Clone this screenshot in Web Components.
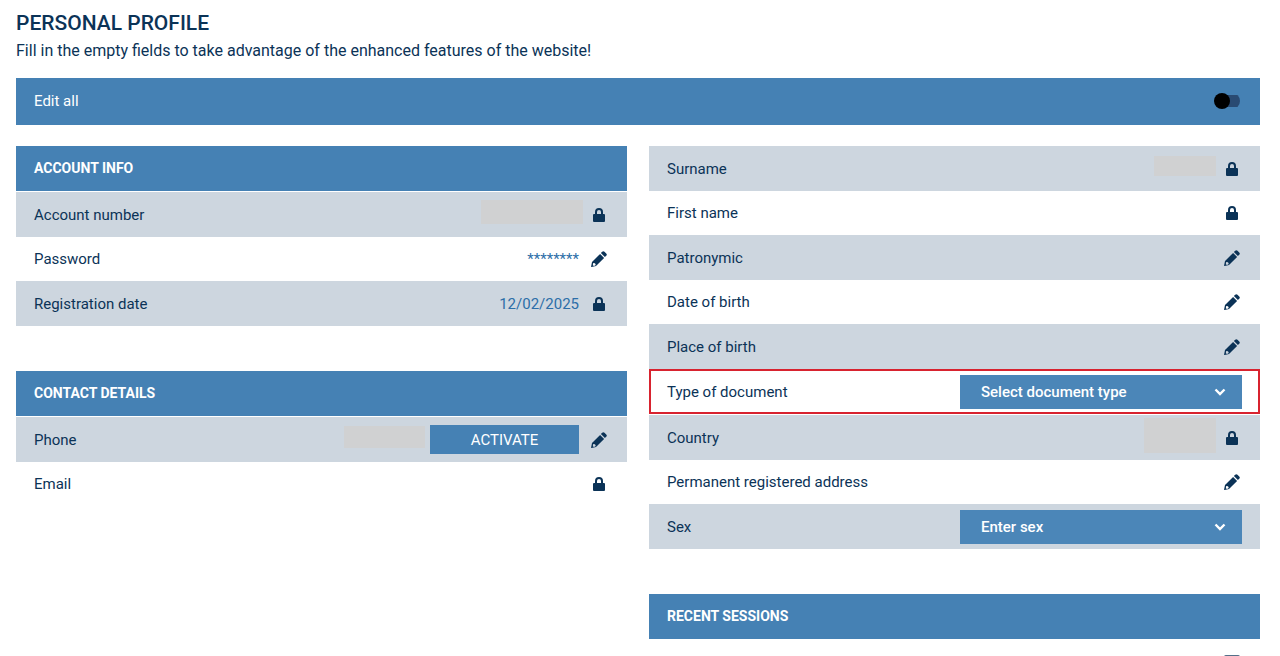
<!DOCTYPE html>
<html lang="en">
<head>
<meta charset="utf-8">
<title>Personal profile</title>
<style>
  html, body { margin: 0; background: #fff; }
  body {
    --blue: #4581b4;
    --shade: #cdd6df;
    --navy: #0b3357;
    --line: #d8232f;
    color: var(--navy);
    font: 400 15px/20px Roboto, "Noto Sans", sans-serif;
  }
</style>
</head>
<body>
<profile-page>
  <edit-bar slot="bar">Edit all</edit-bar>

  <profile-section slot="left" heading="Account info">
    <profile-row label="Account number" icon="lock" shaded><masked-value style="--w:102px;--h:24px"></masked-value></profile-row>
    <profile-row label="Password" icon="pencil">********</profile-row>
    <profile-row label="Registration date" icon="lock" shaded>12/02/2025</profile-row>
  </profile-section>
  <profile-section slot="left" heading="Contact details">
    <profile-row label="Phone" icon="pencil" shaded><masked-value style="--w:81px;--h:22px"></masked-value><action-button>ACTIVATE</action-button></profile-row>
    <profile-row label="Email" icon="lock"></profile-row>
  </profile-section>

  <profile-section slot="right">
    <profile-row label="Surname" icon="lock" shaded><masked-value style="--w:62px;--h:20px"></masked-value></profile-row>
    <profile-row label="First name" icon="lock"></profile-row>
    <profile-row label="Patronymic" icon="pencil" shaded></profile-row>
    <profile-row label="Date of birth" icon="pencil"></profile-row>
    <profile-row label="Place of birth" icon="pencil" shaded></profile-row>
    <profile-select label="Type of document" placeholder="Select document type" options="Passport,ID card,Driving licence" marked></profile-select>
    <profile-row label="Country" icon="lock" shaded><masked-value style="--w:72px;--h:35px"></masked-value></profile-row>
    <profile-row label="Permanent registered address" icon="pencil"></profile-row>
    <profile-select label="Sex" placeholder="Enter sex" options="Female,Male" shaded></profile-select>
  </profile-section>
  <profile-section slot="right" heading="Recent sessions">
    <profile-row icon="screen"></profile-row>
  </profile-section>
</profile-page>

<script>
const icons = {
  lock: '<svg viewBox="0 0 12 14" width="12" height="14" aria-hidden="true"><path fill="none" stroke="currentColor" stroke-width="2" d="M3 7V4a3 3 0 0 1 6 0v3"/><rect y="6" width="12" height="8" rx="1" fill="currentColor"/></svg>',
  pencil: '<svg viewBox="0 0 16 16" width="16" height="16" aria-hidden="true"><path fill="currentColor" d="M11.200.8a1.600 1.600 0 0 1 2.300 0l1.700 1.700a1.600 1.600 0 0 1 0 2.300L13.900 6.100 9.900 2.100zM9.100 2.900l4 4L5 15 .6 15.900a.5.5 0 0 1-.5-.5L1 11zM2.200 12l-.4 2.200 1.200 .9 1.800-1.100-.8-1.700z" fill-rule="evenodd"/></svg>',
  screen: '<svg viewBox="0 0 16 14" width="16" height="14" aria-hidden="true"><path fill="currentColor" fill-opacity=".7" d="M2 0h12a2 2 0 0 1 2 2v7a2 2 0 0 1-2 2h-4v2h2v1H4v-1h2v-2H2a2 2 0 0 1-2-2V2a2 2 0 0 1 2-2zm0 2v7h12V2z"/></svg>'
};

class Base extends HTMLElement {
  constructor() { super(); this.attachShadow({ mode: 'open' }); }
  connectedCallback() { this.shadowRoot.innerHTML = this.view(); }
  attr(name) { return this.getAttribute(name) || ''; }
}

const rowStyles = `
  :host { display: flex; align-items: center; gap: 10px; box-sizing: border-box; height: 44px; padding: 0 18px; }
  :host([shaded]) { height: 45px; background: var(--shade); }
  .label { flex: 1; }
`;

class ProfilePage extends Base {
  view() {
    return `<style>
      :host { display: block; box-sizing: border-box; height: 100vh; overflow: hidden; padding: 11px 20px 0 16px; }
      h1 { margin: 0; font-size: 21px; line-height: 24px; font-weight: 500; text-transform: uppercase; }
      p { margin: 6px 0 17px; font-size: 16px; line-height: 20px; }
      .columns { display: grid; grid-template-columns: 1fr 1fr; gap: 22px; margin-top: 21px; }
      .column { display: flex; flex-direction: column; gap: 45px; }
    </style>
    <h1>Personal profile</h1>
    <p>Fill in the empty fields to take advantage of the enhanced features of the website!</p>
    <slot name="bar"></slot>
    <div class="columns">
      <div class="column"><slot name="left"></slot></div>
      <div class="column"><slot name="right"></slot></div>
    </div>`;
  }
}

class EditBar extends Base {
  view() {
    return `<style>
      :host { display: block; background: var(--blue); color: #fff; }
      label { display: flex; align-items: center; justify-content: space-between; height: 46px; padding: 0 20px 1px 18px; }
      input { appearance: none; display: flex; align-items: center; margin: 0; width: 26px; height: 16px;
        background: linear-gradient(#294a72, #294a72) right center / 20px 12px no-repeat; border-radius: 8px; }
      input::before { content: ""; width: 16px; height: 16px; border-radius: 50%; background: #000; }
      input:checked { justify-content: flex-end; background-position: left center; }
    </style>
    <label><slot></slot><input type="checkbox"></label>`;
  }
}

class ProfileSection extends Base {
  view() {
    return `<style>
      :host { display: block; }
      h2 { margin: 0 0 1px; padding: 0 18px; background: var(--blue); color: #fff;
        font-size: 14px; line-height: 45px; font-weight: 700; text-transform: uppercase; }
    </style>
    ${this.attr('heading') ? `<h2>${this.attr('heading')}</h2>` : ''}<slot></slot>`;
  }
}

class ProfileRow extends Base {
  view() {
    const icon = this.attr('icon');
    const glyph = icon === 'pencil'
      ? `<button class="icon" type="button" aria-label="Edit ${this.attr('label')}">${icons.pencil}</button>`
      : `<span class="icon">${icons[icon]}</span>`;
    return `<style>${rowStyles}
      .value { display: flex; align-items: center; gap: 5px; color: #2c6ea8; }
      .icon { display: flex; justify-content: center; width: 20px; padding: 0; border: 0; background: none; color: var(--navy); }
    </style>
    <span class="label">${this.attr('label')}</span><span class="value"><slot></slot></span>${glyph}`;
  }
}

class ProfileSelect extends Base {
  view() {
    const options = this.attr('options').split(',').map(o => `<option>${o}</option>`).join('');
    return `<style>${rowStyles}
      :host([marked]) { height: 45px; margin-bottom: 1px; border: 2px solid var(--line); padding: 0 16px; }
      .box { display: grid; grid-template-columns: 1fr 12px; align-items: center; width: 282px; box-sizing: border-box; padding-right: 16px; background: #4b86b8; color: #fff; }
      select { grid-area: 1 / 1 / 2 / 3; appearance: none; height: 34px; margin: 0 -16px 0 0; padding: 0 38px 0 21px; border: 0; border-radius: 0;
        background: none; color: inherit; font: inherit; font-weight: 500; }
      option { color: var(--navy); background: #fff; }
      svg { grid-area: 1 / 2; pointer-events: none; }
    </style>
    <label class="label" for="field">${this.attr('label')}</label>
    <span class="box">
      <select id="field"><option selected>${this.attr('placeholder')}</option>${options}</select>
      <svg viewBox="0 0 12 8" width="12" height="8" aria-hidden="true"><path d="M1.500 1.500 6 6l4.500-4.500" fill="none" stroke="currentColor" stroke-width="2.400"/></svg>
    </span>`;
  }
}

class MaskedValue extends Base {
  view() {
    return `<style>
      :host { display: block; width: var(--w); height: var(--h); margin-bottom: 5px; background: #d0d1d2; }
      :host(:last-child) { margin-right: -4px; }
    </style>`;
  }
}

class ActionButton extends Base {
  view() {
    return `<style>
      :host { display: block; }
      button { display: block; width: 149px; height: 29px; padding: 0; border: 0; background: var(--blue); color: #fff; font: inherit; }
    </style><button type="button"><slot></slot></button>`;
  }
}

customElements.define('profile-page', ProfilePage);
customElements.define('edit-bar', EditBar);
customElements.define('profile-section', ProfileSection);
customElements.define('profile-row', ProfileRow);
customElements.define('profile-select', ProfileSelect);
customElements.define('masked-value', MaskedValue);
customElements.define('action-button', ActionButton);
</script>
</body>
</html>
